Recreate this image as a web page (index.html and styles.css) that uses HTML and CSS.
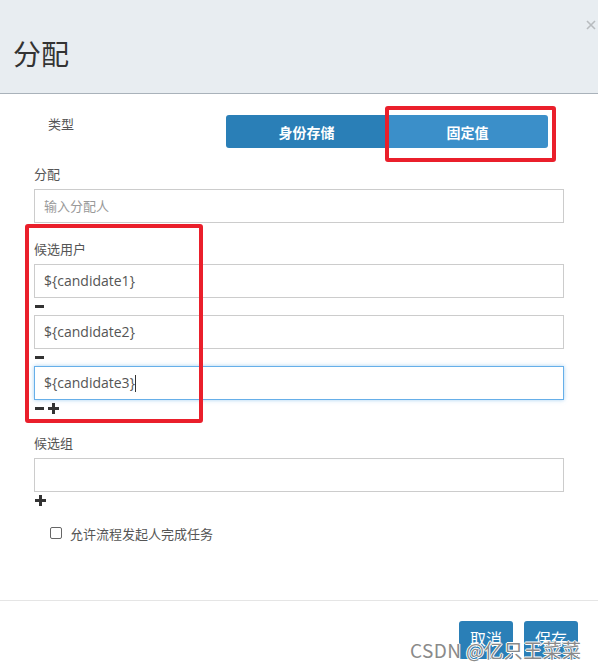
FILE: index.html
```html
<!DOCTYPE html>
<html lang="zh">
<head>
<meta charset="utf-8">
<title>分配</title>
<link rel="stylesheet" href="styles.css">
</head>
<body>
<div class="modal">
  <div class="modal-header">
    <h1 class="title">分配</h1>
    <svg class="close" width="10" height="10" viewBox="0 0 10 10"><path d="M1 1L9 9M9 1L1 9" stroke="#b8bcbf" stroke-width="1.6"/></svg>
  </div>
  <div class="modal-body">
    <div class="type-row">
      <span class="type-label">类型</span>
      <div class="btn-group">
        <span class="seg seg-left">身份存储</span>
        <span class="seg seg-right">固定值</span>
      </div>
    </div>

    <div class="field">
      <div class="label">分配</div>
      <div class="input placeholder">输入分配人</div>
    </div>

    <div class="field">
      <div class="label">候选用户</div>
      <div class="input">${candidate1}</div>
      <div class="actions"><span class="minus"></span></div>
      <div class="input">${candidate2}</div>
      <div class="actions"><span class="minus"></span></div>
      <div class="input focus">${candidate3}<span class="caret"></span></div>
      <div class="actions"><span class="minus"></span><span class="plus"></span></div>
    </div>

    <div class="field">
      <div class="label">候选组</div>
      <div class="input"></div>
      <div class="actions"><span class="plus first"></span></div>
    </div>

    <div class="check-row">
      <span class="checkbox"></span>
      <span class="check-text">允许流程发起人完成任务</span>
    </div>
  </div>
  <div class="modal-footer">
    <span class="btn">取消</span>
    <span class="btn">保存</span>
  </div>

  <div class="mark mark-type"></div>
  <div class="mark mark-users"></div>
  <div class="watermark">CSDN @亿只王菜菜</div>
</div>
</body>
</html>
```
FILE: styles.css
```css
* { box-sizing: border-box; }
html, body { margin: 0; padding: 0; background: #fff; }
body {
  font-family: "Open Sans", "Noto Sans CJK SC", sans-serif;
  color: #555;
  width: 598px;
  height: 672px;
  overflow: hidden;
}
.modal { position: relative; width: 598px; height: 672px; }
.modal-header {
  position: relative;
  height: 94px;
  background: #e8edf1;
  border-bottom: 1px solid #a9b2ba;
  display: flex;
  align-items: center;
  padding-left: 13px;
}
.title {
  margin: 0;
  font-family: "Noto Sans CJK SC", sans-serif;
  font-weight: normal;
  font-size: 28px;
  color: #333;
  line-height: 1;
  padding-top: 12px;
}
.close { position: absolute; right: 2px; top: 20px; }
.modal-body { padding: 21px 34px 0; height: 506px; }
.type-row {
  display: flex;
  height: 33px;
}
.type-label {
  font-family: "Noto Sans CJK SC", sans-serif;
  font-size: 13px;
  color: #555;
  margin-left: 14px;
  width: 178px;
  line-height: 18px;
}
.btn-group { display: flex; width: 322px; height: 33px; border-radius: 3px; overflow: hidden; }
.seg {
  flex: 1;
  display: flex;
  align-items: center;
  justify-content: center;
  color: #fff;
  font-family: "Noto Sans CJK SC", sans-serif;
  font-weight: bold;
  font-size: 14px;
}
.seg-left { background: #2a7fb7; }
.seg-right { background: #3b8fc9; }
.field { margin-top: 16px; }
.label {
  font-family: "Noto Sans CJK SC", sans-serif;
  font-size: 13px;
  line-height: 20px;
  color: #555;
  margin-bottom: 5px;
}
.input {
  height: 34px;
  border: 1px solid #ccc;
  padding: 0 9px;
  font-size: 14px;
  line-height: 32px;
  color: #555;
  display: flex;
  align-items: center;
}
.input.placeholder {
  color: #999;
  font-family: "Noto Sans CJK SC", sans-serif;
  font-size: 13px;
}
.input.focus {
  border-color: #66afe9;
  box-shadow: 0 0 4px rgba(102, 175, 233, 0.6);
}
.caret { display: inline-block; width: 1px; height: 17px; background: #333; }
.actions { height: 17px; display: flex; align-items: center; gap: 4px; padding-left: 1px; }
.minus { display: inline-block; width: 9px; height: 3px; background: #333; }
.plus { position: relative; display: inline-block; width: 11px; height: 11px; }
.plus::before, .plus::after { content: ""; position: absolute; background: #333; }
.plus::before { left: 0; top: 4px; width: 11px; height: 3px; }
.plus::after { left: 4px; top: 0; width: 3px; height: 11px; }
.check-row {
  display: flex;
  align-items: center;
  margin-top: 14px;
  height: 20px;
  padding-left: 16px;
}
.checkbox {
  width: 12px; height: 12px;
  border: 1px solid #666;
  border-radius: 2px;
  margin-right: 8px;
}
.check-text {
  font-family: "Noto Sans CJK SC", sans-serif;
  font-size: 13px;
  color: #555;
}
.modal-footer {
  border-top: 1px solid #e5e5e5;
  height: 72px;
  display: flex;
  justify-content: flex-end;
  gap: 11px;
  padding: 20px 20px 0 0;
}
.btn {
  width: 54px;
  height: 38px;
  background: #2a7fb7;
  border-radius: 3px;
  color: #fff;
  font-family: "Noto Sans CJK SC", sans-serif;
  font-size: 16px;
  display: flex;
  justify-content: center;
  padding-top: 5px;
}
.mark {
  position: absolute;
  border: 4px solid #ea1f2b;
  border-radius: 3px;
}
.mark-type { left: 385px; top: 106px; width: 171px; height: 56px; }
.mark-users { left: 25px; top: 224px; width: 178px; height: 199px; }
.watermark {
  position: absolute;
  left: 410px;
  top: 639px;
  font-family: "Noto Sans CJK SC", sans-serif;
  font-size: 19px;
  line-height: 1.2;
  color: #8a8a8a;
  letter-spacing: 0.4px;
  text-shadow: -1px 0 #fff, 1px 0 #fff, 0 -1px #fff, 0 1px #fff;
}
```
